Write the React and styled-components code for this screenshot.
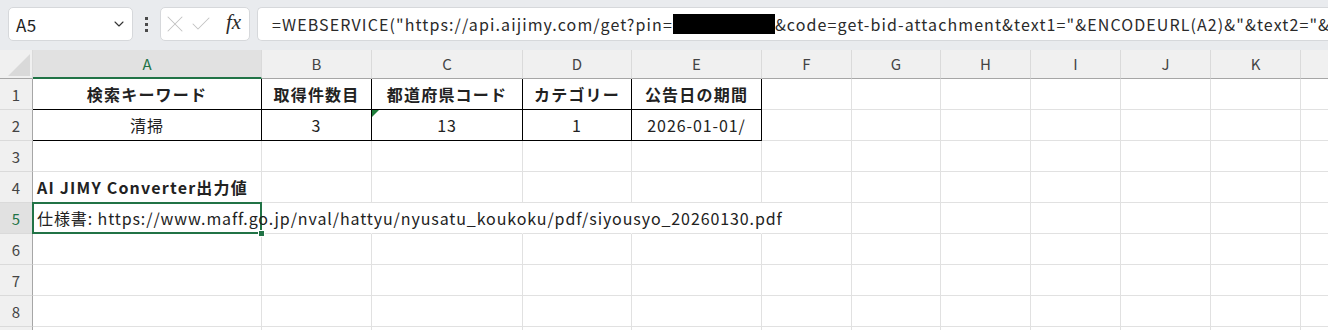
import React from "react";
import styled, { createGlobalStyle } from "styled-components";
import { ChevronDown, X, Check } from "lucide-react";

const GlobalStyle = createGlobalStyle`
  html, body {
    margin: 0;
    padding: 0;
    background: #ffffff;
    overflow: hidden;
  }
  body {
    font-family: "Noto Sans CJK JP", "Noto Sans", sans-serif;
    color: #222;
  }
`;

const FormulaBar = styled.div`
  height: 50px;
  box-sizing: border-box;
  background: #e9ebee;
  display: flex;
  align-items: flex-start;
  padding: 7px 0 0 8px;
  overflow: hidden;
`;

const NameBox = styled.div`
  width: 125px;
  height: 34px;
  box-sizing: border-box;
  background: #fff;
  border: 1px solid #d6d8db;
  border-radius: 5px;
  display: flex;
  align-items: center;
  justify-content: space-between;
  padding: 0 5px 0 7px;
  font-size: 17px;
  letter-spacing: 0.5px;
  color: #222;
`;

const Dots = styled.div`
  width: 27px;
  height: 34px;
  display: flex;
  flex-direction: column;
  align-items: center;
  justify-content: center;
  gap: 3px;

  > span {
    width: 3px;
    height: 3px;
    background: #4a4a4a;
  }
`;

const FxBox = styled.div`
  width: 90px;
  height: 34px;
  box-sizing: border-box;
  background: #fff;
  border: 1px solid #d6d8db;
  border-radius: 5px;
  display: flex;
  align-items: center;
  padding: 0 0 0 0;
  color: #c2c2c2;
`;

const Fx = styled.span`
  font-family: "Liberation Serif", serif;
  font-style: italic;
  font-size: 21px;
  color: #2a2a2a;
  margin-left: 13px;
  margin-top: -3px;
`;

const FormulaInput = styled.div`
  flex: 1;
  margin-left: 7px;
  height: 34px;
  box-sizing: border-box;
  background: #fff;
  border: 1px solid #d6d8db;
  border-right: none;
  border-radius: 5px 0 0 5px;
  display: flex;
  align-items: center;
  padding-left: 14px;
  white-space: nowrap;
  overflow: hidden;
  font-size: 16px;
  letter-spacing: 1.1px;
  color: #2a2a2a;
`;

const Redacted = styled.span`
  display: inline-block;
  flex-shrink: 0;
  width: 102px;
  height: 20px;
  background: #000;
`;

const Sheet = styled.div`
  display: grid;
  grid-template-columns: 33px ${(p) => p.cols.map((w) => `${w}px`).join(" ")};
  grid-template-rows: 29px repeat(9, 31px);
  overflow: hidden;
  width: 1328px;
`;

const Corner = styled.div`
  background: #f0f0f0;
  border-right: 1px solid #dadada;
  border-bottom: 1px solid #a6a6a6;
  display: flex;
  align-items: flex-end;
  justify-content: flex-end;
  padding: 0 2px 2px 0;
`;

const ColHead = styled.div`
  background: ${(p) => (p.active ? "#e1e1e1" : "#f0f0f0")};
  color: ${(p) => (p.active ? "#217346" : "#444")};
  border-right: 1px solid #dadada;
  border-bottom: ${(p) => (p.active ? "2px solid #217346" : "1px solid #a6a6a6")};
  display: flex;
  align-items: center;
  justify-content: center;
  font-size: 15px;
  padding-bottom: ${(p) => (p.active ? "0" : "1px")};
`;

const RowHead = styled.div`
  background: ${(p) => (p.active ? "#e1e1e1" : "#f0f0f0")};
  color: ${(p) => (p.active ? "#217346" : "#444")};
  border-right: 1px solid #a6a6a6;
  border-bottom: 1px solid #dadada;
  display: flex;
  align-items: center;
  justify-content: center;
  font-size: 15px;
`;

const Cell = styled.div`
  position: relative;
  border-right: 1px solid ${(p) => (p.hideRight ? "transparent" : p.boxed ? "#000" : "#e1e1e1")};
  border-bottom: 1px solid ${(p) => (p.boxed ? "#000" : "#e1e1e1")};
  display: flex;
  align-items: center;
  justify-content: ${(p) => (p.center ? "center" : "flex-start")};
  padding: 0 4px;
  font-size: 16px;
  letter-spacing: ${(p) => (p.bold ? "1.2px" : "0.9px")};
  font-weight: ${(p) => (p.bold ? 700 : 400)};
  white-space: nowrap;
  min-width: 0;
  color: #222;

  ${(p) =>
    p.selected &&
    `
    z-index: 2;
    &::after {
      content: "";
      position: absolute;
      top: -1px;
      left: -1px;
      right: -1px;
      bottom: -1px;
      border: 2px solid #217346;
      pointer-events: none;
    }
    &::before {
      content: "";
      position: absolute;
      right: -4px;
      bottom: -4px;
      width: 5px;
      height: 5px;
      background: #217346;
      border: 1px solid #fff;
      z-index: 3;
    }
  `}
`;

const Overflow = styled.span`
  position: relative;
  z-index: 1;
`;

const ErrorMark = styled.span`
  position: absolute;
  top: 0;
  left: 0;
  width: 0;
  height: 0;
  border-top: 7px solid #1e7d3a;
  border-right: 7px solid transparent;
`;

const cols = [229, 110, 151, 109, 130, 90, 89, 90, 90, 90, 90, 90];
const letters = ["A", "B", "C", "D", "E", "F", "G", "H", "I", "J", "K", ""];

const data = {
  1: {
    0: { text: "検索キーワード", bold: true, center: true },
    1: { text: "取得件数目", bold: true, center: true },
    2: { text: "都道府県コード", bold: true, center: true },
    3: { text: "カテゴリー", bold: true, center: true },
    4: { text: "公告日の期間", bold: true, center: true },
  },
  2: {
    0: { text: "清掃", center: true },
    1: { text: "3", center: true },
    2: { text: "13", center: true, mark: true },
    3: { text: "1", center: true },
    4: { text: "2026-01-01/", center: true },
  },
  4: { 0: { text: "AI JIMY Converter出力値", bold: true } },
  5: {
    0: {
      text: "仕様書: https://www.maff.go.jp/nval/hattyu/nyusatu_koukoku/pdf/siyousyo_20260130.pdf",
      selected: true,
    },
  },
};

export default function App() {
  const rows = [1, 2, 3, 4, 5, 6, 7, 8, 9];
  return (
    <>
      <GlobalStyle />
      <FormulaBar>
        <NameBox>
          <span>A5</span>
          <ChevronDown size={16} strokeWidth={1.6} color="#333" />
        </NameBox>
        <Dots>
          <span />
          <span />
          <span />
        </Dots>
        <FxBox>
          <X size={28} strokeWidth={0.9} />
          <Check size={24} strokeWidth={1.05} />
          <Fx>fx</Fx>
        </FxBox>
        <FormulaInput>
          =WEBSERVICE("https://api.aijimy.com/get?pin=
          <Redacted />
          &amp;code=get-bid-attachment&amp;text1="&amp;ENCODEURL(A2)&amp;"&amp;text2="&amp;
        </FormulaInput>
      </FormulaBar>
      <Sheet cols={cols}>
        <Corner>
          <svg width="22" height="22" viewBox="0 0 22 22">
            <polygon points="22,0 22,22 0,22" fill="#d9d9d9" />
          </svg>
        </Corner>
        {letters.map((l, i) => (
          <ColHead key={i} active={i === 0}>
            {l}
          </ColHead>
        ))}
        {rows.map((r) => (
          <React.Fragment key={r}>
            <RowHead active={r === 5}>{r < 9 ? r : ""}</RowHead>
            {letters.map((l, i) => {
              const c = (data[r] && data[r][i]) || {};
              const boxed = (r === 1 || r === 2) && i <= 4;
              const hideRight = r === 5 && i <= 4;
              return (
                <Cell
                  key={i}
                  boxed={boxed}
                  hideRight={hideRight && !c.selected}
                  center={c.center}
                  bold={c.bold}
                  selected={c.selected}
                >
                  {c.mark && <ErrorMark />}
                  {c.text && <Overflow>{c.text}</Overflow>}
                </Cell>
              );
            })}
          </React.Fragment>
        ))}
      </Sheet>
    </>
  );
}
